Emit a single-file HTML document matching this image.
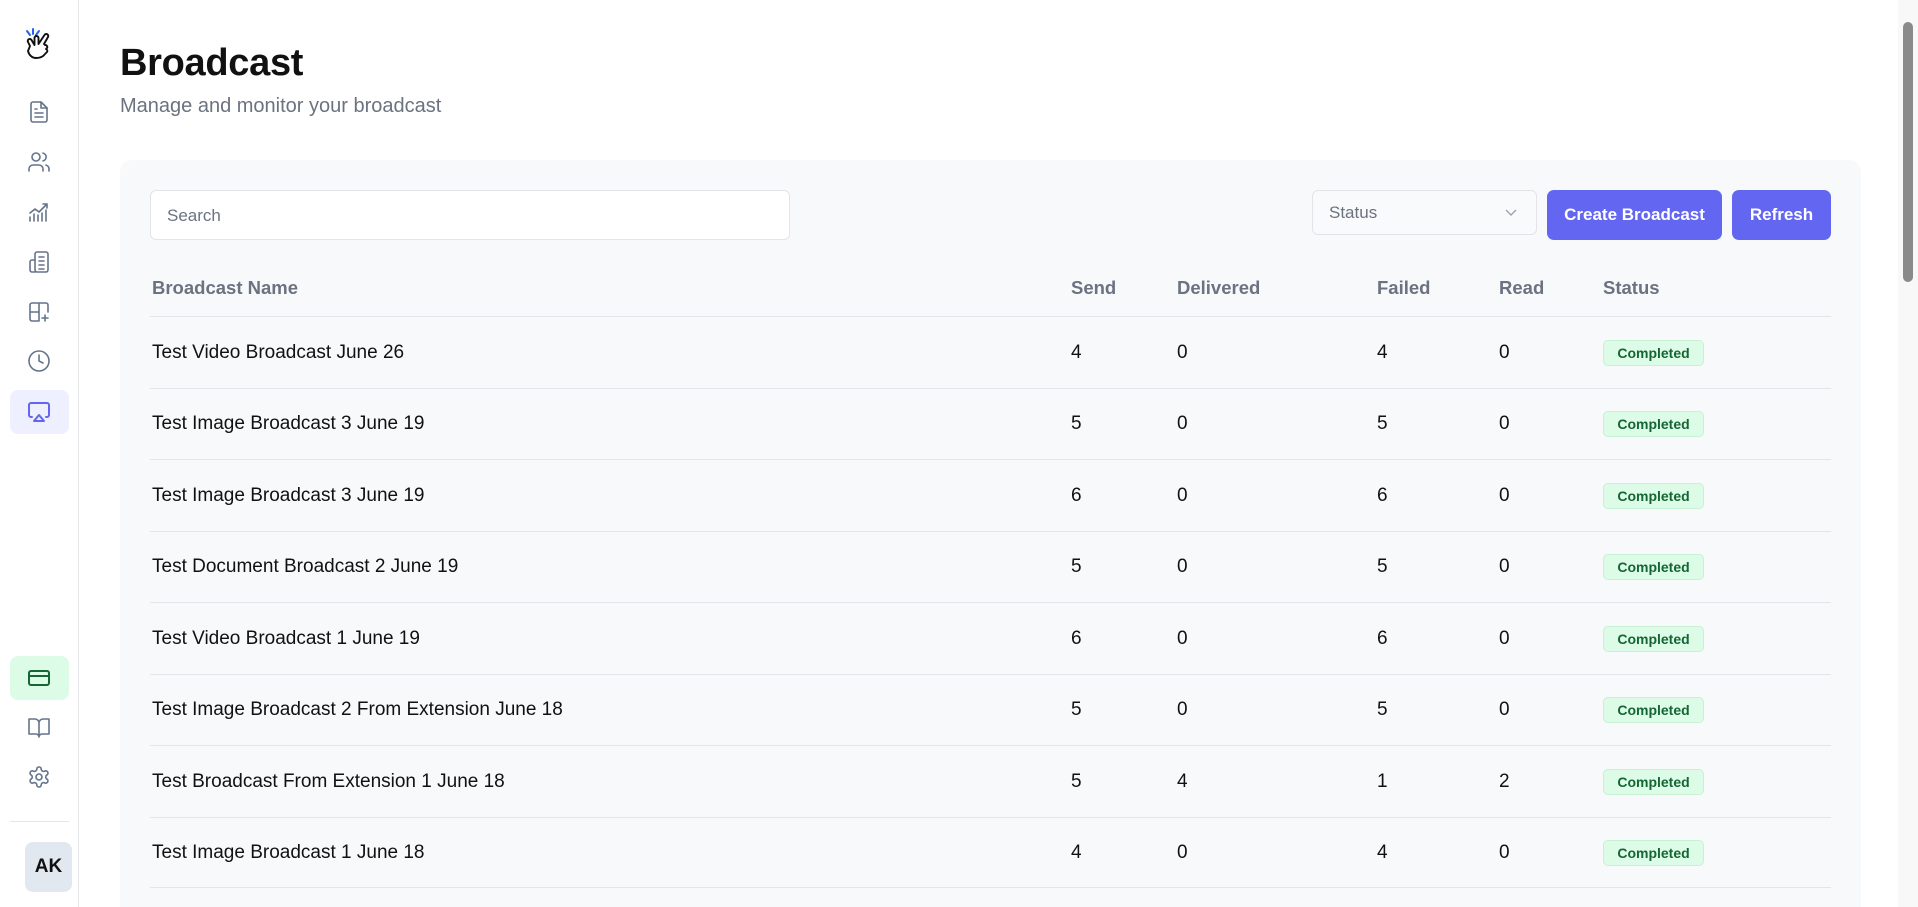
<!DOCTYPE html>
<html style="overflow:hidden;height:907px"><head><meta charset="utf-8"><style>
*{box-sizing:border-box;margin:0;padding:0}
body{width:1918px;height:907px;overflow:hidden;background:#fff;font-family:"Liberation Sans",sans-serif;color:#111;position:relative}
.side{position:absolute;left:0;top:0;width:79px;height:907px;border-right:1px solid #e5e7eb;background:#fff}
.ic{position:absolute;left:27px;width:24px;height:24px}
.ic svg{width:24px;height:24px;fill:none;stroke:#64748b;stroke-width:1.6;stroke-linecap:round;stroke-linejoin:round}
.box{position:absolute;left:10px;width:59px;height:44px;border-radius:8px}
h1{position:absolute;left:120px;top:42px;font-size:38px;font-weight:700;letter-spacing:-0.3px}
.sub{position:absolute;left:120px;top:95px;font-size:20px;color:#6b7280}
.panel{position:absolute;left:120px;top:160px;width:1741px;height:747px;background:#f8f9fb;border-radius:12px 12px 0 0}
.search{position:absolute;left:150px;top:190px;width:640px;height:50px;border:1px solid #e2e4e8;border-radius:6px;background:#fff;font-size:17px;color:#6b7280;padding:15px 0 0 16px}
.sel{position:absolute;left:1312px;top:190px;width:225px;height:45px;border:1px solid #e2e4e8;border-radius:6px;background:#f9fafb;font-size:17px;color:#6b7280;padding:12px 0 0 16px}
.btn{position:absolute;top:190px;height:50px;background:#6366f1;color:#fff;border-radius:7px;font-size:17px;font-weight:700;text-align:center;line-height:50px}
.row{position:absolute;left:150px;width:1681px;height:72px;border-bottom:1px solid #e3e5e8;font-size:19px}
.row span{position:absolute;top:0;line-height:72px}
.hd span{color:#6b7280;font-weight:700;font-size:18.5px;top:7px}
.badge{position:absolute;left:1453px;top:23px;width:101px;height:26px;border:1px solid #c8f0d4;background:#dcfce7;color:#166534;border-radius:5px;font-size:14px;font-weight:700;text-align:center;line-height:24px}
.sb{position:absolute;right:0;top:0;width:20px;height:907px;background:#f8f8f8}
.th{position:absolute;right:5px;top:22px;width:10px;height:260px;background:#8a8a8a;border-radius:6px}
</style></head><body>
<div class="side">
 <svg style="position:absolute;left:24px;top:28px" width="32" height="34" viewBox="0 0 32 34"><g fill="none" stroke-linecap="round"><path d="M3 3l3 4M9 1v5M15 3l-3 4" stroke="#2563eb" stroke-width="2"/><path d="M6 18l-2 -4a2 2 0 0 1 3.5-2l3 5V10a2 2 0 0 1 4 0v6l6-9a2 2 0 0 1 3.5 2l-4 7 1 1a2 2 0 0 1 2 3l-1 1a2 2 0 0 1 1 3l-2 2c-2 3-5 4-9 4s-7-3-8-7z" stroke="#111" stroke-width="1.9" stroke-linejoin="round"/></g></svg>
 <div class="ic" style="top:100px"><svg viewBox="0 0 24 24"><path d="M14 2H6a2 2 0 0 0-2 2v16a2 2 0 0 0 2 2h12a2 2 0 0 0 2-2V8z"/><path d="M14 2v6h6M8 13h8M8 17h8M8 9h2"/></svg></div>
 <div class="ic" style="top:150px"><svg viewBox="0 0 24 24"><circle cx="9" cy="7" r="4"/><path d="M2 21v-2a4 4 0 0 1 4-4h6a4 4 0 0 1 4 4v2M16 3.1a4 4 0 0 1 0 7.8M22 21v-2a4 4 0 0 0-3-3.9"/></svg></div>
 <div class="ic" style="top:200px"><svg viewBox="0 0 24 24"><path d="M3 21v-4M7 21v-7M11 21v-6M15 21v-8M19 21v-11M3 13l5-4 4 3 8-8M16 4h4v4"/></svg></div>
 <div class="ic" style="top:250px"><svg viewBox="0 0 24 24"><rect x="8" y="2" width="13" height="20" rx="2"/><path d="M8 10H5a2 2 0 0 0-2 2v8a2 2 0 0 0 2 2h3M12 7h5M12 11h5M12 15h5M12 19h5"/></svg></div>
 <div class="ic" style="top:300px"><svg viewBox="0 0 24 24"><path d="M12 3h7a2 2 0 0 1 2 2v7M12 3H5a2 2 0 0 0-2 2v7h9zM3 12v7a2 2 0 0 0 2 2h7v-9M18 15v6M15 18h6"/></svg></div>
 <div class="ic" style="top:349px"><svg viewBox="0 0 24 24"><circle cx="12" cy="12" r="10"/><path d="M12 6v6l4 2"/></svg></div>
 <div class="box" style="top:390px;background:#eef0ff"></div>
 <div class="ic" style="top:400px"><svg viewBox="0 0 24 24" style="stroke:#6366f1;stroke-width:2"><path d="M5 17H4a2 2 0 0 1-2-2V5a2 2 0 0 1 2-2h16a2 2 0 0 1 2 2v10a2 2 0 0 1-2 2h-1M12 15l5 6H7z"/></svg></div>
 <div class="box" style="top:656px;background:#dcfce7"></div>
 <div class="ic" style="top:666px"><svg viewBox="0 0 24 24" style="stroke:#166534;stroke-width:2"><rect x="2" y="5" width="20" height="14" rx="2"/><path d="M2 10h20"/></svg></div>
 <div class="ic" style="top:716px"><svg viewBox="0 0 24 24"><path d="M2 3h6a4 4 0 0 1 4 4v14a3 3 0 0 0-3-3H2zM22 3h-6a4 4 0 0 0-4 4v14a3 3 0 0 1 3-3h7z"/></svg></div>
 <div class="ic" style="top:765px"><svg viewBox="0 0 24 24"><path d="M12.2 2h-.4a2 2 0 0 0-2 2v.2a2 2 0 0 1-1 1.7l-.4.3a2 2 0 0 1-2 0l-.2-.1a2 2 0 0 0-2.7.7l-.2.4a2 2 0 0 0 .7 2.7l.2.1a2 2 0 0 1 1 1.7v.5a2 2 0 0 1-1 1.8l-.2.1a2 2 0 0 0-.7 2.7l.2.4a2 2 0 0 0 2.7.7l.2-.1a2 2 0 0 1 2 0l.4.3a2 2 0 0 1 1 1.7v.2a2 2 0 0 0 2 2h.4a2 2 0 0 0 2-2v-.2a2 2 0 0 1 1-1.7l.4-.3a2 2 0 0 1 2 0l.2.1a2 2 0 0 0 2.7-.7l.2-.4a2 2 0 0 0-.7-2.7l-.2-.1a2 2 0 0 1-1-1.8v-.5a2 2 0 0 1 1-1.7l.2-.1a2 2 0 0 0 .7-2.7l-.2-.4a2 2 0 0 0-2.7-.7l-.2.1a2 2 0 0 1-2 0l-.4-.3a2 2 0 0 1-1-1.7V4a2 2 0 0 0-2-2z"/><circle cx="12" cy="12" r="3"/></svg></div>
 <div style="position:absolute;left:10px;top:821px;width:59px;height:1px;background:#e5e7eb"></div>
 <div style="position:absolute;left:25px;top:842px;width:47px;height:50px;border-radius:8px;background:#e2e8f0;font-weight:700;font-size:19px;text-align:center;line-height:50px">AK</div>
</div>
<h1>Broadcast</h1>
<div class="sub">Manage and monitor your broadcast</div>
<div class="panel"></div>
<div class="search">Search</div>
<div class="sel">Status<svg style="position:absolute;right:18px;top:17px" width="14" height="10" viewBox="0 0 14 10"><path d="M2 2l5 5 5-5" fill="none" stroke="#9ca3af" stroke-width="1.4"/></svg></div>
<div class="btn" style="left:1547px;width:175px">Create Broadcast</div>
<div class="btn" style="left:1732px;width:99px">Refresh</div>
<div class="row hd" style="top:245px"><span style="left:2px">Broadcast Name</span><span style="left:921px">Send</span><span style="left:1027px">Delivered</span><span style="left:1227px">Failed</span><span style="left:1349px">Read</span><span style="left:1453px">Status</span></div>
<div class="row" style="top:317px"><span style="left:2px">Test Video Broadcast June 26</span><span style="left:921px">4</span><span style="left:1027px">0</span><span style="left:1227px">4</span><span style="left:1349px">0</span><div class="badge">Completed</div></div>
<div class="row" style="top:388px"><span style="left:2px">Test Image Broadcast 3 June 19</span><span style="left:921px">5</span><span style="left:1027px">0</span><span style="left:1227px">5</span><span style="left:1349px">0</span><div class="badge">Completed</div></div>
<div class="row" style="top:460px"><span style="left:2px">Test Image Broadcast 3 June 19</span><span style="left:921px">6</span><span style="left:1027px">0</span><span style="left:1227px">6</span><span style="left:1349px">0</span><div class="badge">Completed</div></div>
<div class="row" style="top:531px"><span style="left:2px">Test Document Broadcast 2 June 19</span><span style="left:921px">5</span><span style="left:1027px">0</span><span style="left:1227px">5</span><span style="left:1349px">0</span><div class="badge">Completed</div></div>
<div class="row" style="top:603px"><span style="left:2px">Test Video Broadcast 1 June 19</span><span style="left:921px">6</span><span style="left:1027px">0</span><span style="left:1227px">6</span><span style="left:1349px">0</span><div class="badge">Completed</div></div>
<div class="row" style="top:674px"><span style="left:2px">Test Image Broadcast 2 From Extension June 18</span><span style="left:921px">5</span><span style="left:1027px">0</span><span style="left:1227px">5</span><span style="left:1349px">0</span><div class="badge">Completed</div></div>
<div class="row" style="top:746px"><span style="left:2px">Test Broadcast From Extension 1 June 18</span><span style="left:921px">5</span><span style="left:1027px">4</span><span style="left:1227px">1</span><span style="left:1349px">2</span><div class="badge">Completed</div></div>
<div class="row" style="top:817px;height:71px"><span style="left:2px">Test Image Broadcast 1 June 18</span><span style="left:921px">4</span><span style="left:1027px">0</span><span style="left:1227px">4</span><span style="left:1349px">0</span><div class="badge">Completed</div></div>
<div class="sb"><div class="th"></div></div>
</body></html>
